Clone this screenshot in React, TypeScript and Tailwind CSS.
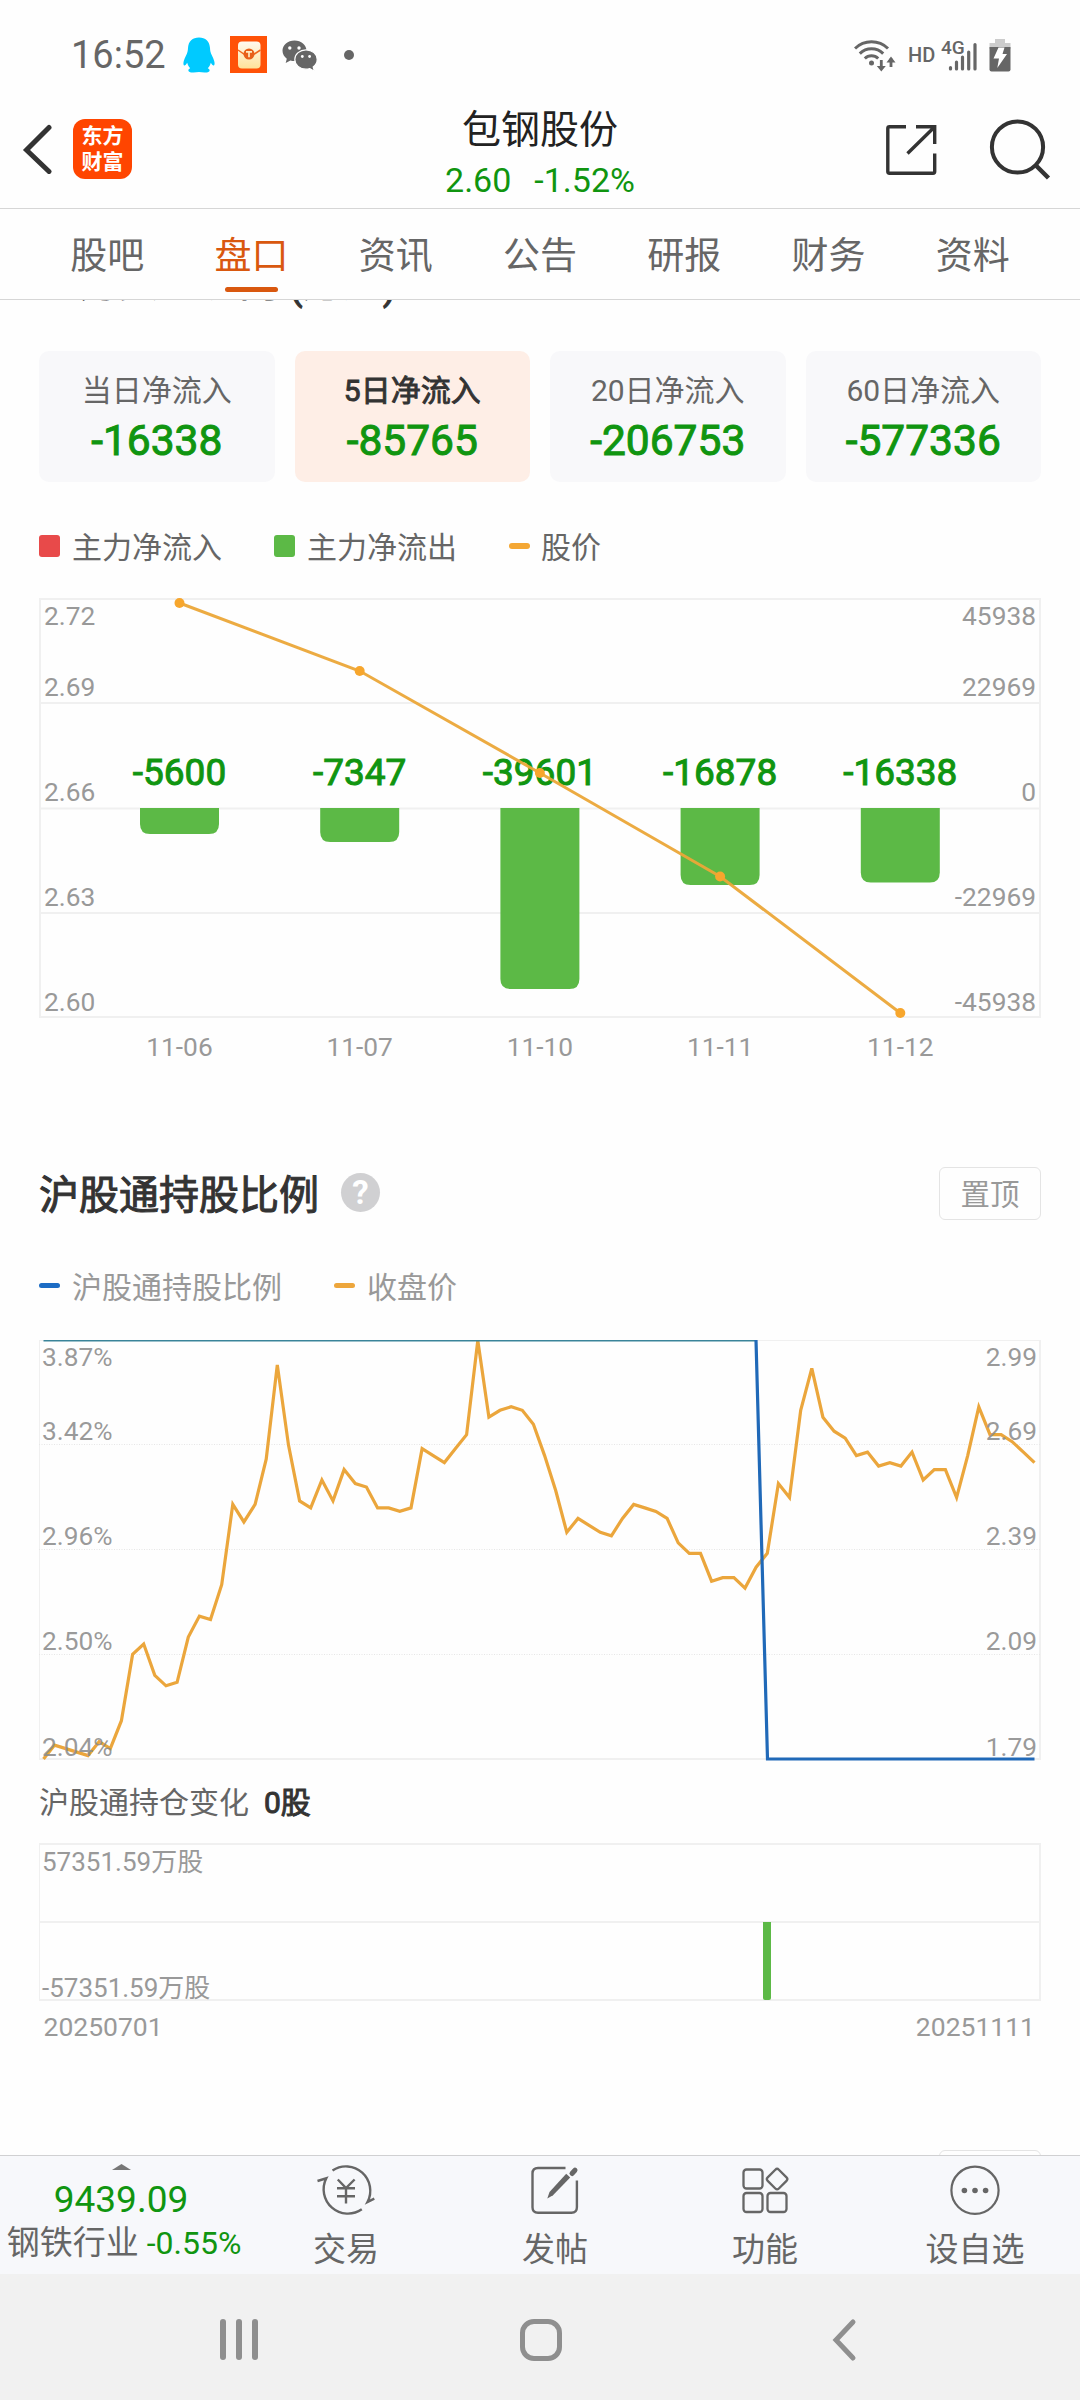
import React from "react";

const GREEN = "#109510";

const tabs = ["股吧", "盘口", "资讯", "公告", "研报", "财务", "资料"];

const flows = [
  { label: "当日净流入", value: "-16338" },
  { label: "5日净流入", value: "-85765", active: true },
  { label: "20日净流入", value: "-206753" },
  { label: "60日净流入", value: "-577336" },
];

const days = [
  { date: "11-06", value: "-5600", bar: 26, price: 5 },
  { date: "11-07", value: "-7347", bar: 34, price: 73 },
  { date: "11-10", value: "-39601", bar: 181, price: 175 },
  { date: "11-11", value: "-16878", bar: 77, price: 278.5 },
  { date: "11-12", value: "-16338", bar: 74.5, price: 415 },
];

const closes = [
  1.79, 1.83, 1.82, 1.81, 1.8, 1.84, 1.82, 1.9, 2.09, 2.12, 2.03, 2.0, 2.01, 2.14, 2.2, 2.19, 2.29, 2.52, 2.47, 2.52,
  2.65, 2.92, 2.69, 2.53, 2.51, 2.59, 2.53, 2.62, 2.58, 2.57, 2.51, 2.51, 2.5, 2.51, 2.68, 2.66, 2.64, 2.68, 2.72,
  2.99, 2.77, 2.79, 2.8, 2.79, 2.75, 2.66, 2.56, 2.44, 2.48, 2.46, 2.44, 2.43, 2.48, 2.52, 2.51, 2.5, 2.48, 2.41,
  2.38, 2.38, 2.3, 2.31, 2.31, 2.28, 2.34, 2.38, 2.58, 2.54, 2.79, 2.91, 2.77, 2.73, 2.71, 2.66, 2.67, 2.63, 2.64,
  2.63, 2.67, 2.59, 2.62, 2.62, 2.54, 2.66, 2.8, 2.72, 2.72, 2.7, 2.67, 2.64,
];

function StatusBar() {
  return (
    <div className="flex h-[108px] items-center justify-between pl-[71px] pr-[69px] pt-[1px] text-[#666]">
      <div className="flex items-center">
        <span className="w-[112px] text-[38px] leading-[38px]">16:52</span>
        <svg className="h-[36px] w-[32px]" viewBox="0 0 32 36">
          <path
            fill="#00caff"
            d="M16 .5C9.500.5 5.300 4.500 5 11c-.1 2.500-.5 4-1 5.500C2.500 19.500.5 23.500.4 26c0 2 .5 2.500 1 2.500.8 0 2-1.400 2.800-2.800.5 2.200 1.500 4 3 5.500-1.200.6-2 1.500-1.800 2.600.3 1.500 2.300 1.800 5 1.700 2-.1 4-.5 5.600-.5s3.600.4 5.600.5c2.700.1 4.700-.2 5-1.700.2-1.100-.6-2-1.800-2.600 1.500-1.500 2.500-3.300 3-5.500.8 1.400 2 2.800 2.800 2.800.5 0 1-.5 1-2.500-.1-2.500-2.100-6.500-3.600-9.500-.5-1.500-.9-3-1-5.500C26.700 4.500 22.500.5 16 .5z"
          />
        </svg>
        <svg className="ml-[15px] h-[37px] w-[37px]" viewBox="0 0 37 37">
          <defs>
            <linearGradient id="env" x1="0" y1="0" x2="0" y2="1">
              <stop offset="0" stopColor="#fffaf0" />
              <stop offset="1" stopColor="#ffe29a" />
            </linearGradient>
          </defs>
          <rect width="37" height="37" fill="#ff5208" />
          <rect x="8" y="5.500" width="22.500" height="27" rx="4" fill="url(#env)" />
          <path d="M8 14l11 7.500L30.500 14" fill="none" stroke="#f0661c" strokeWidth="1.500" />
          <circle cx="19" cy="18" r="5.500" fill="#e8601a" />
          <path d="M16 15.800h6M19 15.800v5.500" stroke="#ffe9c0" strokeWidth="1.700" />
        </svg>
        <svg className="ml-[15px] h-[32px] w-[36px]" viewBox="0 0 36 32">
          <path
            fill="#666"
            d="M12.500 1.500C5.800 1.500.5 6 .5 11.800c0 3.300 1.700 6 4.300 7.900L3.700 24l4.700-2.600c1.300.4 2.700.6 4.100.6 6.700 0 12-4.500 12-10.200S19.200 1.500 12.500 1.500z"
          />
          <path
            fill="#666"
            stroke="#fff"
            strokeWidth="1.200"
            d="M24 10.800c-6.200 0-11.200 4.400-11.200 9.700s5 9.700 11.200 9.700c1.300 0 2.600-.2 3.800-.6l4.600 2.600-1.200-4.200c2.400-1.800 4-4.500 4-7.500 0-5.300-5-9.700-11.200-9.700z"
          />
          <g fill="#fff">
            <circle cx="7.800" cy="9" r="1.700" />
            <circle cx="17" cy="9" r="1.700" />
            <circle cx="20.300" cy="17.500" r="1.400" />
            <circle cx="27.600" cy="17.500" r="1.400" />
          </g>
        </svg>
        <span className="ml-[26px] size-[10px] rounded-full bg-[#666]" />
      </div>
      <div className="flex items-center">
        <svg className="h-[34px] w-[42px]" viewBox="0 0 42 34" fill="none" stroke="#666" strokeWidth="3">
          <path d="M1 10.500a23.500 23.500 0 0 1 33 0M5.800 15.600a16.500 16.500 0 0 1 23.400 0M10.800 20.500a9.500 9.500 0 0 1 13.400 0" />
          <circle cx="17.500" cy="25" r="2.500" fill="#666" stroke="none" />
          <path d="M27.300 22v8M37 20.500v8.500" strokeWidth="2.800" />
          <path d="M22.800 28h9l-4.500 5.500zM32.500 24.500h9L37 18.500z" fill="#666" stroke="none" />
        </svg>
        <span className="ml-[12px] w-[28px] text-[20px] font-medium leading-[20px]">HD</span>
        <svg className="ml-[5px] h-[34px] w-[38px]" viewBox="0 0 38 34">
          <text x="0" y="16" fontSize="19" fontWeight="500" fill="#666">4G</text>
          <g stroke="#666" strokeWidth="3.200" strokeLinecap="round">
            <path d="M9.500 29.500V31M15.500 24v7M21.500 19v12M27.700 14v17M34 6.500V31" />
          </g>
        </svg>
        <svg className="ml-[10px] h-[34px] w-[22px]" viewBox="0 0 22 34">
          <path d="M6 1h10v4h5.500v6H.5V5H6z" fill="#ccc" />
          <path d="M.5 9h21v22.500q0 2-2 2h-17q-2 0-2-2z" fill="#666" />
          <path d="M9.500 9.500h6l-2 6.500h4.500L8.300 30l1.700-9.500H4.500z" fill="#fff" />
        </svg>
      </div>
    </div>
  );
}

function Header() {
  return (
    <div className="flex h-[101px] items-start border-b border-[#d6d6d6]">
      <div className="flex w-[300px] items-center pl-[22px] pt-[11px]">
        <svg className="h-[50px] w-[30px]" viewBox="0 0 30 50" fill="none" stroke="#333" strokeWidth="5">
          <path d="M27 3.500L4.500 26l22.500 21.500" strokeLinecap="round" strokeLinejoin="miter" />
        </svg>
        <div className="ml-[21px] flex h-[60px] w-[59px] flex-col items-center justify-center rounded-[12px] bg-[#ff4500] text-[21px] font-bold leading-[26px] text-white">
          <span>东方</span>
          <span>财富</span>
        </div>
      </div>
      <div className="flex flex-1 flex-col items-center text-[#222]">
        <div className="h-[44px] text-[39px] leading-[44px]">包钢股份</div>
        <div className="mt-[6px] flex gap-[23px] text-[34px] leading-[44px] text-[#109510]">
          <span>2.60</span>
          <span>-1.52%</span>
        </div>
      </div>
      <div className="flex w-[300px] items-start justify-end pr-[29px] pt-[11px]">
        <svg className="mt-[5px] h-[52px] w-[52px]" viewBox="0 0 52 52" fill="none" stroke="#333" strokeWidth="3.400">
          <path d="M21 2.800H4.500Q2.800 2.800 2.800 4.500v43q0 1.700 1.700 1.700h43.500q1.700 0 1.700-1.700V29.500M31 2.800h18.700V20M49 3.500L22.500 29.500" />
        </svg>
        <svg className="ml-[52px] h-[62px] w-[62px]" viewBox="0 0 62 62" fill="none" stroke="#333">
          <circle cx="28.500" cy="28" r="25.600" strokeWidth="4" />
          <path d="M47 46.500L59.500 59" strokeWidth="4.500" />
        </svg>
      </div>
    </div>
  );
}

function Tabs() {
  return (
    <div className="flex h-[91px] border-b border-[#d6d6d6] px-[35px]">
      {tabs.map((t) => (
        <div key={t} className="flex flex-1 flex-col items-center">
          <span
            className={
              t === "盘口"
                ? "mt-[25px] text-[37px] leading-[46px] text-[#d9580f]"
                : "mt-[25px] text-[37px] leading-[46px] text-[#666]"
            }
          >
            {t}
          </span>
          {t === "盘口" && <span className="mt-[7px] h-[5px] w-[53px] rounded-full bg-[#d9580f]" />}
        </div>
      ))}
    </div>
  );
}

function FlowCards() {
  return (
    <div className="grid h-[131px] grid-cols-4 gap-[20px]">
      {flows.map((f) => (
        <div
          key={f.label}
          className={
            f.active
              ? "flex flex-col items-center rounded-[10px] bg-[#feeee6] pt-[20px] text-[#333]"
              : "flex flex-col items-center rounded-[10px] bg-[#f8f8fa] pt-[20px] text-[#666]"
          }
        >
          <span
            className={
              f.active
                ? "text-[30px] leading-[39px] [-webkit-text-stroke:0.9px_#333]"
                : "text-[30px] leading-[39px]"
            }
          >
            {f.label}
          </span>
          <span className="mt-[7px] text-[42.500px] leading-[48px] text-[#109510] [-webkit-text-stroke:1px_#109510]">
            {f.value}
          </span>
        </div>
      ))}
    </div>
  );
}

function FlowChart() {
  const left = ["2.72", "2.69", "2.66", "2.63", "2.60"];
  const right = ["45938", "22969", "0", "-22969", "-45938"];
  const base = [27, 98, 203, 308, 413];
  const x = (i: number) => 140.5 + i * 180.2;
  return (
    <svg className="block h-[470px] w-[1002px]" viewBox="0 0 1002 470">
      <g fill="none" stroke="#f0f0f0" strokeWidth="2">
        <rect x="1" y="1" width="1000" height="418" />
        <path d="M0 105h1002M0 210.500h1002M0 315h1002" />
      </g>
      <g fontSize="26.300" fill="#999">
        {left.map((t, i) => (
          <text key={t} x="5" y={base[i]}>{t}</text>
        ))}
        {right.map((t, i) => (
          <text key={t} x="997" y={base[i]} textAnchor="end">{t}</text>
        ))}
      </g>
      {days.map((d, i) => (
        <g key={d.date} textAnchor="middle">
          <path
            d={`M${x(i) - 39.5} 210h79v${d.bar - 10}q0 10-10 10h-59q-10 0-10-10z`}
            fill="#5cb946"
          />
          <text x={x(i)} y="186.500" fontSize="37" fill={GREEN} stroke={GREEN} strokeWidth="1">{d.value}</text>
          <text x={x(i)} y="458" fontSize="26.300" fill="#999">{d.date}</text>
        </g>
      ))}
      <polyline
        points={days.map((d, i) => `${x(i)},${d.price}`).join(" ")}
        fill="none"
        stroke="#eba638"
        strokeOpacity="0.950"
        strokeWidth="3"
      />
      {days.map((d, i) => (
        <circle key={d.date} cx={x(i)} cy={d.price} r="5" fill="#f7a62d" />
      ))}
    </svg>
  );
}

function RatioChart() {
  const left = ["3.87%", "3.42%", "2.96%", "2.50%", "2.04%"];
  const right = ["2.99", "2.69", "2.39", "2.09", "1.79"];
  const base = [26, 100, 205, 310, 416];
  const pts = closes
    .map((c, i) => `${(4.5 + i * 11.135).toFixed(1)},${(0.5 + (2.99 - c) * 348.8).toFixed(1)}`)
    .join(" ");
  return (
    <svg className="block h-[421px] w-[1002px]" viewBox="0 0 1002 421">
      <g fill="none" stroke="#f0f0f0">
        <path d="M0.500 0v420M0 0.500h1002" />
        <path d="M1001 0v420M0 419h1002" strokeWidth="2" />
        <path d="M0 104.500h1002M0 209.500h1002M0 314.500h1002" stroke="#e6e6e6" strokeDasharray="1 1.500" />
      </g>
      <polyline points={pts} fill="none" stroke="#eba63c" strokeWidth="3.200" />
      <path d="M4.500 0.500H717" fill="none" stroke="#3a8499" strokeWidth="2" />
      <path d="M717 0L728.500 419H995.500" fill="none" stroke="#2069b8" strokeWidth="3.200" />
      <g fontSize="26.300" fill="#8c8c8c" fillOpacity="0.880">
        {left.map((t, i) => (
          <text key={t} x="3" y={base[i]}>{t}</text>
        ))}
        {right.map((t, i) => (
          <text key={t} x="998" y={base[i]} textAnchor="end">{t}</text>
        ))}
      </g>
    </svg>
  );
}

function ChangeChart() {
  return (
    <svg className="block h-[200px] w-[1002px]" viewBox="0 0 1002 200">
      <g fill="none" stroke="#f0f0f0" strokeWidth="2">
        <path d="M0 1h1002M0 79h1002M0 157h1002M1001 0v158" />
        <path d="M0.500 0v158" strokeWidth="1" />
      </g>
      <path d="M724 79h8v76q0 2-2 2h-4q-2 0-2-2z" fill="#5cb946" />
      <g fontSize="26" fill="#999">
        <text x="3" y="28">57351.59万股</text>
        <text x="3" y="154">-57351.59万股</text>
        <text x="4.500" y="193" fontSize="26.500">20250701</text>
        <text x="996" y="193" fontSize="26.500" textAnchor="end">20251111</text>
      </g>
    </svg>
  );
}

function BottomBar() {
  return (
    <div className="flex h-[119px] border-t border-[#d0d0d2] bg-[#f7f8fb] text-[33px] leading-[38px] text-[#666]">
      <div className="flex w-[242px] flex-col items-center">
        <svg className="mt-[8px] h-[6px] w-[19px]" viewBox="0 0 19 6">
          <path d="M0 6L9.500 0 19 6z" fill="#777" />
        </svg>
        <span className="mt-[9px] text-[37px] leading-[42px] text-[#109510]">9439.09</span>
        <div className="mt-[1px] flex h-[42px] items-center gap-[8px] whitespace-nowrap pl-[6px] leading-[42px]">
          <span>钢铁行业</span>
          <span className="text-[32px] text-[#109510]">-0.55%</span>
        </div>
      </div>
      <div className="flex w-[208px] flex-col items-center pt-[8px]">
        <svg className="h-[52px] w-[60px]" viewBox="0 0 60 52" fill="none" stroke="#666" strokeWidth="2.400">
          <path d="M16.500 6.500A24.300 24.300 0 0 1 51.500 38L58.300 34.700M1.500 17L10.300 14.300A24.300 24.300 0 0 0 45.800 45.300" />
          <path d="M21.800 15.500L30 24l8.600-8.500M30 24v15.500M21 24.200h18M21 32.200h18" />
        </svg>
        <span className="mt-[15px]">交易</span>
      </div>
      <div className="flex w-[210px] flex-col items-center pt-[8px]">
        <svg className="h-[52px] w-[52px]" viewBox="0 0 52 52" fill="none" stroke="#666" strokeWidth="2.400">
          <path d="M36.500 4H9Q3.500 4 3.500 9.500v33.700q0 5.500 5.500 5.500h33.400q5.500 0 5.500-5.500V16.500" />
          <path d="M18.300 34.500l2.200-6.500L37.200 9.800l4 3.600L24 31.300z" fill="#666" stroke="none" />
          <path d="M43 9.500L46 6.200" strokeWidth="5" strokeLinecap="round" />
        </svg>
        <span className="mt-[15px]">发帖</span>
      </div>
      <div className="flex w-[210px] flex-col items-center pt-[8px]">
        <svg className="h-[52px] w-[48px]" viewBox="0 0 48 52" fill="none" stroke="#666" strokeWidth="2.300">
          <rect x="2.500" y="5.500" width="19" height="19" rx="3" />
          <rect x="2.500" y="29" width="19" height="19" rx="3" />
          <rect x="26.500" y="29" width="19" height="19" rx="3" />
          <rect x="28.200" y="7.200" width="15.800" height="15.800" rx="2.500" transform="rotate(45 36.100 15.100)" />
        </svg>
        <span className="mt-[15px]">功能</span>
      </div>
      <div className="flex w-[210px] flex-col items-center pt-[8px]">
        <svg className="h-[52px] w-[52px]" viewBox="0 0 52 52">
          <circle cx="26" cy="26.300" r="23.600" fill="none" stroke="#666" strokeWidth="2.200" />
          <g fill="#666">
            <circle cx="15.400" cy="26.500" r="2.800" />
            <circle cx="26" cy="26.500" r="2.800" />
            <circle cx="36.600" cy="26.500" r="2.800" />
          </g>
        </svg>
        <span className="mt-[15px]">设自选</span>
      </div>
    </div>
  );
}

function SystemNav() {
  return (
    <div className="flex h-[126px] items-center bg-[#f1f1f1] pl-[220px] pt-[5px]">
      <div className="flex w-[300px] gap-[10px]">
        <span className="h-[41px] w-[6px] rounded-full bg-[#8f8f8f]" />
        <span className="h-[41px] w-[6px] rounded-full bg-[#8f8f8f]" />
        <span className="h-[41px] w-[6px] rounded-full bg-[#8f8f8f]" />
      </div>
      <div className="h-[42px] w-[42px] rounded-[14px] border-[5px] border-[#8f8f8f]" />
      <svg className="ml-[269px] h-[44px] w-[28px] shrink-0" viewBox="0 0 28 44" fill="none" stroke="#8f8f8f" strokeWidth="5">
        <path d="M22 4L5 22l17 18" strokeLinecap="round" />
      </svg>
    </div>
  );
}

export default function App() {
  return (
    <div className="flex h-[2400px] w-[1080px] flex-col overflow-hidden bg-[#fefefe] font-['Roboto','Noto_Sans_CJK_SC',sans-serif]">
      <StatusBar />
      <Header />
      <Tabs />
      <main className="h-[1855px] overflow-hidden px-[39px]">
        <div className="-mt-[40px] h-[91px] text-[40px] leading-[46px] text-[#333] [-webkit-text-stroke:1px_#333]">
          主力资金流向
          <span className="inline-block translate-y-[3px] whitespace-pre"> (</span>
          万元
          <span className="inline-block translate-y-[3px]">)</span>
        </div>
        <FlowCards />
        <div className="mt-[45px] flex h-[40px] items-center text-[30px] leading-[40px] text-[#666]">
          <span className="-mt-[3px] h-[22px] w-[21px] rounded-[3px] bg-[#e84a4a]" />
          <span className="ml-[12px] mt-[1px] w-[202px]">主力净流入</span>
          <span className="-mt-[3px] h-[22px] w-[21px] rounded-[3px] bg-[#5cb946]" />
          <span className="ml-[12px] mt-[1px] w-[202px]">主力净流出</span>
          <span className="-mt-[3px] h-[6px] w-[21px] rounded-full bg-[#f4a734]" />
          <span className="ml-[11px] mt-[1px]">股价</span>
        </div>
        <div className="mt-[31px]">
          <FlowChart />
        </div>
        <div className="mt-[99px] flex h-[53px] items-center">
          <h2 className="mt-[4px] text-[40px] font-normal leading-[53px] text-[#333] [-webkit-text-stroke:1px_#333]">
            沪股通持股比例
          </h2>
          <span className="-mt-[3px] ml-[22px] flex size-[39px] items-center justify-center rounded-full bg-[#d0d0d2] text-[33px] font-bold leading-[39px] text-white">
            ?
          </span>
          <span className="ml-auto flex h-[53px] w-[102px] items-center justify-center rounded-[6px] border border-[#e4e4e4] pt-[2px] text-[29.500px] leading-[50px] text-[#999]">
            置顶
          </span>
        </div>
        <div className="mt-[46px] flex h-[40px] items-center text-[30px] leading-[40px] text-[#999]">
          <span className="-mt-[1px] h-[5px] w-[21px] rounded-full bg-[#1c6cc4]" />
          <span className="ml-[12px] mt-[3px] w-[262px]">沪股通持股比例</span>
          <span className="-mt-[1px] h-[5px] w-[21px] rounded-full bg-[#eda63c]" />
          <span className="ml-[12px] mt-[3px]">收盘价</span>
        </div>
        <div className="mt-[34px]">
          <RatioChart />
        </div>
        <div className="mt-[21px] flex h-[42px] gap-[15px] text-[30px] leading-[42px] text-[#666]">
          <span>沪股通持仓变化</span>
          <span className="text-[#333] [-webkit-text-stroke:1px_#333]">0股</span>
        </div>
        <div className="mt-[19px]">
          <ChangeChart />
        </div>
        <div className="mt-[107px] flex justify-end">
          <span className="h-[53px] w-[102px] rounded-[6px] border border-[#e4e4e4]" />
        </div>
      </main>
      <BottomBar />
      <SystemNav />
    </div>
  );
}
